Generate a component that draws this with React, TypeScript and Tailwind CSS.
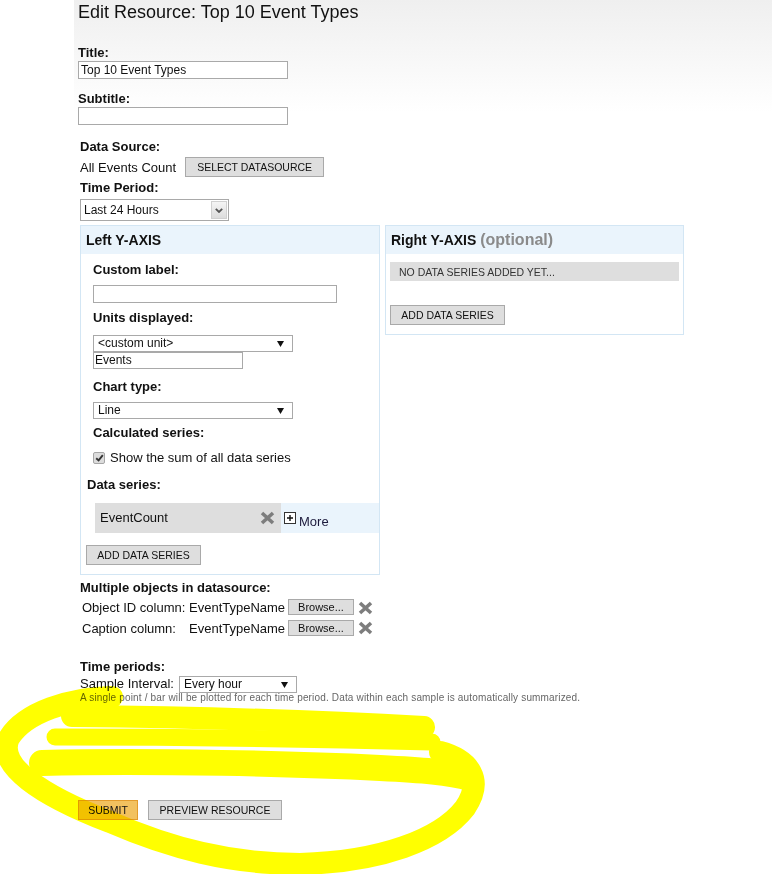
import React from "react";

const Label = ({ children, className = "" }: { children: React.ReactNode; className?: string }) => (
  <div className={`text-[13px] font-bold leading-[16px] text-[#111] ${className}`}>{children}</div>
);

const GrayBtn = ({ children, className = "" }: { children: React.ReactNode; className?: string }) => (
  <div
    className={`flex h-[20px] items-center justify-center border border-[#a9a9a9] bg-[#dedede] text-[10.5px] leading-[12px] text-[#111] ${className}`}
  >
    {children}
  </div>
);

const Tri = () => (
  <svg width="7" height="6" viewBox="0 0 7 6">
    <polygon points="0,0 7,0 3.5,6" fill="#111" />
  </svg>
);

const Select = ({ text, className = "" }: { text: string; className?: string }) => (
  <div
    className={`flex h-[17px] items-center justify-between border border-[#a9a9a9] bg-white pl-[4px] pr-[8px] text-[12px] leading-[15px] text-[#111] ${className}`}
  >
    <span>{text}</span>
    <Tri />
  </div>
);

const XIcon = () => (
  <svg width="15" height="14" viewBox="0 0 15 14">
    <path d="M2 2 L13 12 M13 2 L2 12" stroke="#7d7d7d" strokeWidth="3.6" />
  </svg>
);

const PlusBox = () => (
  <svg width="12" height="12" viewBox="0 0 12 12">
    <rect x="0.5" y="0.5" width="11" height="11" fill="#fff" stroke="#333" />
    <path d="M3 6 H9 M6 3 V9" stroke="#111" strokeWidth="1.4" />
  </svg>
);

export default function App() {
  return (
    <div className="relative h-[874px] w-[772px] overflow-hidden bg-white font-['Liberation_Sans',Arial,sans-serif] text-[#111]">
      <div className="ml-[74px] h-full bg-[linear-gradient(#efefef,#ffffff_112px)] pl-[4px]">
        <h1 className="text-[18px] leading-[24px] text-[#111]">Edit Resource: Top 10 Event Types</h1>

        <Label className="mt-[21px]">Title:</Label>
        <div className="h-[18px] w-[210px] border border-[#a9a9a9] bg-white pl-[2px] text-[12px] leading-[16px]">
          Top 10 Event Types
        </div>

        <Label className="mt-[12px]">Subtitle:</Label>
        <div className="h-[18px] w-[210px] border border-[#a9a9a9] bg-white" />

        <div className="ml-[2px]">
          <Label className="mt-[14px]">Data Source:</Label>
          <div className="mt-[2px] flex h-[20px] items-start">
            <span className="mt-[3px] text-[13px] leading-[16px]">All Events Count</span>
            <GrayBtn className="ml-[9px] w-[139px]">SELECT DATASOURCE</GrayBtn>
          </div>

          <Label className="mt-[3px]">Time Period:</Label>
          <div className="mt-[3px] flex h-[22px] w-[149px] items-stretch border border-[#a9a9a9] bg-white">
            <span className="flex-1 pl-[3px] text-[12px] leading-[20px]">Last 24 Hours</span>
            <div className="m-[1px] flex w-[16px] items-center justify-center border border-[#d0d0d0] bg-[linear-gradient(#f4f4f4,#dcdcdc)]">
              <svg width="8" height="5" viewBox="0 0 8 5">
                <path d="M0.8 0.8 L4 4 L7.2 0.8" stroke="#555" strokeWidth="1.8" fill="none" />
              </svg>
            </div>
          </div>

          <div className="mt-[4px] flex items-start gap-[5px]">
            {/* Left panel */}
            <div className="w-[300px] border border-[#d3e6f4] bg-white">
              <div className="h-[28px] bg-[#eaf4fc] px-[5px] text-[14px] font-bold leading-[28px]">Left Y-AXIS</div>
              <div className="pb-[9px] pl-[12px] pt-[8px]">
                <Label>Custom label:</Label>
                <div className="mt-[7px] h-[18px] w-[244px] border border-[#a9a9a9] bg-white" />
                <Label className="mt-[7px]">Units displayed:</Label>
                <Select text="<custom unit>" className="mt-[9px] w-[200px]" />
                <div className="h-[17px] w-[150px] border border-[#a9a9a9] bg-white pl-[1px] text-[12px] leading-[15px]">
                  Events
                </div>
                <Label className="mt-[10px]">Chart type:</Label>
                <Select text="Line" className="mt-[7px] w-[200px]" />
                <Label className="mt-[6px]">Calculated series:</Label>
                <div className="mt-[9px] flex h-[16px] items-center">
                  <div className="flex h-[12px] w-[12px] items-center justify-center rounded-[2px] border border-[#a6a6a6] bg-[#dcdcdc]">
                    <svg width="9" height="8" viewBox="0 0 9 8">
                      <path d="M1.2 4.2 L3.6 6.4 L7.8 1.2" stroke="#333" strokeWidth="1.9" fill="none" />
                    </svg>
                  </div>
                  <span className="ml-[5px] text-[13px] leading-[16px]">Show the sum of all data series</span>
                </div>
                <Label className="-ml-[6px] mt-[11px]">Data series:</Label>
                <div className="ml-[2px] mt-[10px] flex h-[30px]">
                  <div className="flex w-[186px] items-center justify-between bg-[#dedede] pl-[5px] pr-[6px]">
                    <span className="text-[13px] leading-[16px]">EventCount</span>
                    <XIcon />
                  </div>
                  <div className="flex flex-1 items-start bg-[#eaf4fc] pl-[3px] pt-[9px]">
                    <PlusBox />
                    <span className="ml-[3px] mt-[2px] text-[13px] leading-[16px] text-[#1c1a3c]">More</span>
                  </div>
                </div>
                <GrayBtn className="-ml-[7px] mt-[12px] w-[115px]">ADD DATA SERIES</GrayBtn>
              </div>
            </div>

            {/* Right panel */}
            <div className="w-[299px] border border-[#d3e6f4] bg-white">
              <div className="h-[28px] bg-[#eaf4fc] px-[5px] font-bold leading-[28px]">
                <span className="text-[14px]">Right Y-AXIS </span>
                <span className="text-[16px] text-[#8a8a8a]">(optional)</span>
              </div>
              <div className="px-[4px] pb-[9px] pt-[8px]">
                <div className="flex h-[19px] items-center bg-[#dedede] pl-[9px] text-[10.5px] leading-[12px] text-[#333]">
                  NO DATA SERIES ADDED YET...
                </div>
                <GrayBtn className="mt-[24px] w-[115px]">ADD DATA SERIES</GrayBtn>
              </div>
            </div>
          </div>

          <Label className="mt-[5px]">Multiple objects in datasource:</Label>
          <div className="ml-[2px] mt-[3px]">
            <div className="flex h-[21px] items-start text-[13px] leading-[16px]">
              <span className="w-[107px] pt-[1px]">Object ID column:</span>
              <span className="w-[99px] pt-[1px]">EventTypeName</span>
              <div className="flex h-[16px] w-[66px] items-center justify-center border border-[#a9a9a9] bg-[#dedede] text-[11px] leading-[12px]">
                Browse...
              </div>
              <div className="ml-[4px] mt-[2px]">
                <XIcon />
              </div>
            </div>
            <div className="flex h-[21px] items-start text-[13px] leading-[16px]">
              <span className="w-[107px] pt-[1px]">Caption column:</span>
              <span className="w-[99px] pt-[1px]">EventTypeName</span>
              <div className="flex h-[16px] w-[66px] items-center justify-center border border-[#a9a9a9] bg-[#dedede] text-[11px] leading-[12px]">
                Browse...
              </div>
              <div className="ml-[4px] mt-[1px]">
                <XIcon />
              </div>
            </div>
          </div>

          <Label className="mt-[18px]">Time periods:</Label>
          <div className="mt-[1px] flex h-[16px] items-start">
            <span className="w-[99px] text-[13px] leading-[16px]">Sample Interval:</span>
            <Select text="Every hour" className="h-[16px] w-[118px]" />
          </div>
          <div className="text-[10px] leading-[11px] tracking-[0.16px] text-[#666]">
            A single point / bar will be plotted for each time period. Data within each sample is automatically summarized.
          </div>
        </div>

        <div className="mt-[97px] flex items-center gap-[10px]">
          <div className="flex h-[20px] w-[60px] items-center justify-center border border-[#e39b2b] bg-[#f2c15f] text-[10.5px] leading-[12px] text-[#111]">
            SUBMIT
          </div>
          <GrayBtn className="w-[134px]">PREVIEW RESOURCE</GrayBtn>
        </div>
      </div>

      <svg
        className="pointer-events-none absolute left-0 top-0 mix-blend-multiply"
        width="772"
        height="874"
        viewBox="0 0 772 874"
        fill="none"
      >
        <g stroke="#ffff00" strokeLinecap="round" strokeLinejoin="round">
          <path
            d="M 112 697 C 70 698, 25 712, 9 738 C -4 765, 40 795, 110 822 C 170 848, 230 864, 300 864 C 380 862, 440 840, 465 808 C 484 780, 470 760, 440 752"
            strokeWidth="22"
          />
          <path d="M 72 716 C 180 717, 320 721, 424 727" strokeWidth="22" />
          <path d="M 55 737 C 180 737, 320 739, 432 742" strokeWidth="17" />
          <path d="M 42 763 C 150 760, 300 764, 380 768 C 420 770, 450 772, 470 778" strokeWidth="26" />
        </g>
      </svg>
    </div>
  );
}
